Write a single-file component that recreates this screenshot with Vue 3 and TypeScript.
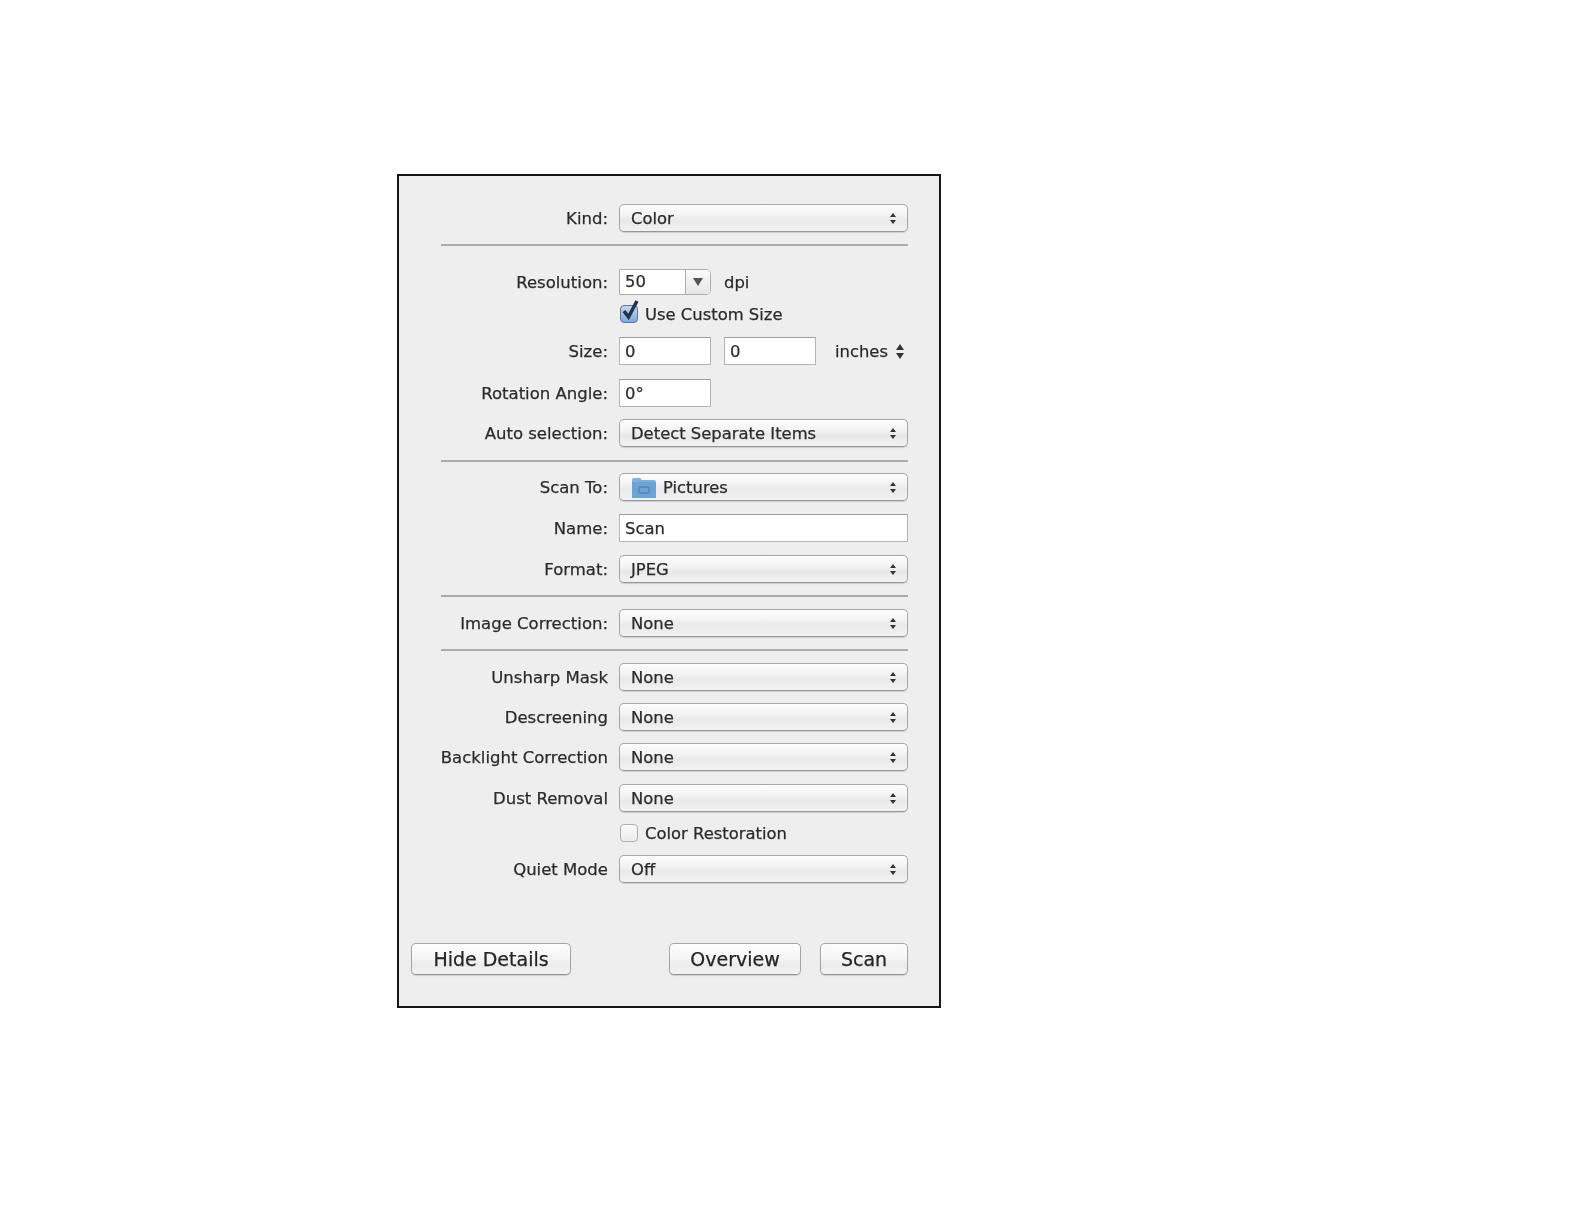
<script setup lang="ts">
const details: string[] = ['Unsharp Mask', 'Descreening', 'Backlight Correction']
</script>

<template>
  <main class="panel">
    <div class="body">
      <div class="row first">
        <label class="label">Kind:</label>
        <div class="popup"><span>Color</span><i class="stepper"></i></div>
      </div>
      <hr class="sep" />

      <div class="row m23 short">
        <label class="label">Resolution:</label>
        <div class="line">
          <div class="combo">
            <span class="combo-value">50</span>
            <span class="combo-btn"><i class="down"></i></span>
          </div>
          <span class="unit">dpi</span>
        </div>
      </div>
      <div class="row m9 check-row">
        <span></span>
        <div class="check">
          <span class="box on">
            <svg class="tick" width="22" height="24" viewBox="0 0 22 24">
              <path d="M5 13 L9.5 19 L18 3" fill="none" stroke="#22344e" stroke-width="3.6" />
            </svg>
          </span>
          <span>Use Custom Size</span>
        </div>
      </div>
      <div class="row m13">
        <label class="label">Size:</label>
        <div class="line">
          <div class="field small">0</div>
          <div class="field small second">0</div>
          <span class="inches">inches</span>
          <i class="stepper big"></i>
        </div>
      </div>
      <div class="row m14">
        <label class="label">Rotation Angle:</label>
        <div class="field small">0°</div>
      </div>
      <div class="row m12">
        <label class="label">Auto selection:</label>
        <div class="popup"><span>Detect Separate Items</span><i class="stepper"></i></div>
      </div>
      <hr class="sep s13" />

      <div class="row m11">
        <label class="label">Scan To:</label>
        <div class="popup">
          <span class="with-icon">
            <svg class="folder" width="26" height="22" viewBox="0 0 26 22">
              <path d="M1 3 Q1 1 3 1 H9 L11 3 H23 Q25 3 25 5 V21 H1 Z" fill="#7fb0da" />
              <path d="M1 5 H25 V21 H1 Z" fill="#6ca3d3" />
              <rect x="8" y="10" width="10" height="6" rx="1" fill="none" stroke="#4f86bb" stroke-width="1.4" />
            </svg>
            Pictures
          </span>
          <i class="stepper"></i>
        </div>
      </div>
      <div class="row m13">
        <label class="label">Name:</label>
        <div class="field">Scan</div>
      </div>
      <div class="row m13">
        <label class="label">Format:</label>
        <div class="popup"><span>JPEG</span><i class="stepper"></i></div>
      </div>
      <hr class="sep" />

      <div class="row m12">
        <label class="label">Image Correction:</label>
        <div class="popup"><span>None</span><i class="stepper"></i></div>
      </div>
      <hr class="sep" />

      <div v-for="name in details" :key="name" class="row m12">
        <label class="label">{{ name }}</label>
        <div class="popup"><span>None</span><i class="stepper"></i></div>
      </div>
      <div class="row m13">
        <label class="label">Dust Removal</label>
        <div class="popup"><span>None</span><i class="stepper"></i></div>
      </div>
      <div class="row m11 check-row">
        <span></span>
        <div class="check">
          <span class="box"></span>
          <span>Color Restoration</span>
        </div>
      </div>
      <div class="row m12">
        <label class="label">Quiet Mode</label>
        <div class="popup"><span>Off</span><i class="stepper"></i></div>
      </div>

      <footer class="actions">
        <button class="btn hide">Hide Details</button>
        <button class="btn overview">Overview</button>
        <button class="btn scan">Scan</button>
      </footer>
    </div>
  </main>
</template>

<style scoped>
.panel {
  box-sizing: border-box;
  width: 544px;
  height: 834px;
  margin: 174px 0 0 397px;
  border: 2px solid #161616;
  background: #eeeeee;
  font-family: "DejaVu Sans", sans-serif;
  font-size: 16.4px;
  color: #2b2b2b;
  -webkit-text-stroke: 0.25px #2b2b2b;
}
.body {
  display: flex;
  flex-direction: column;
  filter: blur(0.5px);
}
.body > * {
  flex: none;
}
.row {
  display: grid;
  grid-template-columns: 209px 289px;
  column-gap: 11px;
  align-items: center;
  height: 28px;
}
.first { margin-top: 28px; }
.short { height: 26px; }
.check-row { height: 20px; }
.m9 { margin-top: 9px; }
.m11 { margin-top: 11px; }
.m12 { margin-top: 12px; }
.m13 { margin-top: 13px; }
.m14 { margin-top: 14px; }
.m23 { margin-top: 23px; }
.label {
  text-align: right;
  white-space: nowrap;
  justify-self: end;
  font-size: 16.5px;
}
.sep {
  box-sizing: border-box;
  width: 467px;
  height: 2px;
  margin: 12px 0 0 42px;
  border: 0;
  background: #ababab;
}
.sep.s13 { margin-top: 13px; }
.popup {
  box-sizing: border-box;
  height: 28px;
  padding: 0 10px 0 11px;
  display: flex;
  align-items: center;
  justify-content: space-between;
  border: 1.5px solid #a8a8a8;
  border-bottom-color: #969696;
  border-radius: 5px;
  background: linear-gradient(#fdfdfd 0%, #f4f4f4 35%, #e9e9e9 60%, #f2f2f2 100%);
  box-shadow: 0 1px 1px rgba(0, 0, 0, 0.14);
}
.with-icon {
  display: flex;
  align-items: center;
  gap: 6px;
}
.folder {
  margin-top: 1px;
}
.stepper {
  position: relative;
  display: block;
  width: 7px;
  height: 11px;
}
.stepper::before,
.stepper::after {
  content: "";
  position: absolute;
  left: 0;
  border-left: 3.5px solid transparent;
  border-right: 3.5px solid transparent;
}
.stepper::before {
  top: 0;
  border-bottom: 4px solid #333;
}
.stepper::after {
  bottom: 0;
  border-top: 4px solid #333;
}
.stepper.big {
  width: 9px;
  height: 15px;
  margin-left: 8px;
}
.stepper.big::before {
  border-left-width: 4.5px;
  border-right-width: 4.5px;
  border-bottom-width: 6px;
}
.stepper.big::after {
  border-left-width: 4.5px;
  border-right-width: 4.5px;
  border-top-width: 6px;
}
.line {
  display: flex;
  align-items: center;
}
.field {
  box-sizing: border-box;
  height: 28px;
  padding-left: 5px;
  display: flex;
  align-items: center;
  background: #fff;
  border: 1.5px solid #b4b4b4;
  border-top-color: #a0a0a0;
}
.field.small { width: 92px; }
.field.second { margin-left: 13px; }
.inches { margin-left: 19px; }
.unit { margin-left: 13px; }
.combo {
  box-sizing: border-box;
  width: 92px;
  height: 26px;
  display: flex;
  border: 1.5px solid #adadad;
  border-radius: 0 5px 5px 0;
  background: #fff;
}
.combo-value {
  width: 66px;
  padding-left: 5px;
  box-sizing: border-box;
  line-height: 23px;
  border-right: 1.5px solid #adadad;
}
.combo-btn {
  flex: 1;
  display: flex;
  align-items: center;
  justify-content: center;
  border-radius: 0 4px 4px 0;
  background: linear-gradient(#fafafa, #e6e6e6);
}
.down {
  display: block;
  border-left: 5px solid transparent;
  border-right: 5px solid transparent;
  border-top: 8px solid #555;
}
.check {
  display: flex;
  align-items: center;
  gap: 7px;
}
.box {
  position: relative;
  box-sizing: border-box;
  width: 18px;
  height: 18px;
  margin-left: 1px;
  border: 1.5px solid #adadad;
  border-radius: 4px;
  background: linear-gradient(#fafafa, #ececec);
}
.box.on {
  border-color: #5f789c;
  background: linear-gradient(#c4d6ee, #83a8d8);
}
.tick {
  position: absolute;
  left: -2px;
  top: -8px;
}
.actions {
  display: flex;
  align-items: stretch;
  height: 32px;
  margin-top: 60px;
  padding-left: 12px;
}
.btn {
  box-sizing: border-box;
  font-family: inherit;
  font-size: 19px;
  color: #242424;
  -webkit-text-stroke: 0.25px #242424;
  padding: 0;
  border: 1.5px solid #a6a6a6;
  border-bottom-color: #929292;
  border-radius: 5px;
  background: linear-gradient(#fdfdfd 0%, #f5f5f5 45%, #ebebeb 70%, #f3f3f3 100%);
  box-shadow: 0 1px 1px rgba(0, 0, 0, 0.14);
}
.hide { width: 160px; }
.overview { width: 132px; margin-left: 98px; }
.scan { width: 88px; margin-left: 19px; }
</style>

<style>
html, body {
  margin: 0;
  background: #fff;
}
</style>
